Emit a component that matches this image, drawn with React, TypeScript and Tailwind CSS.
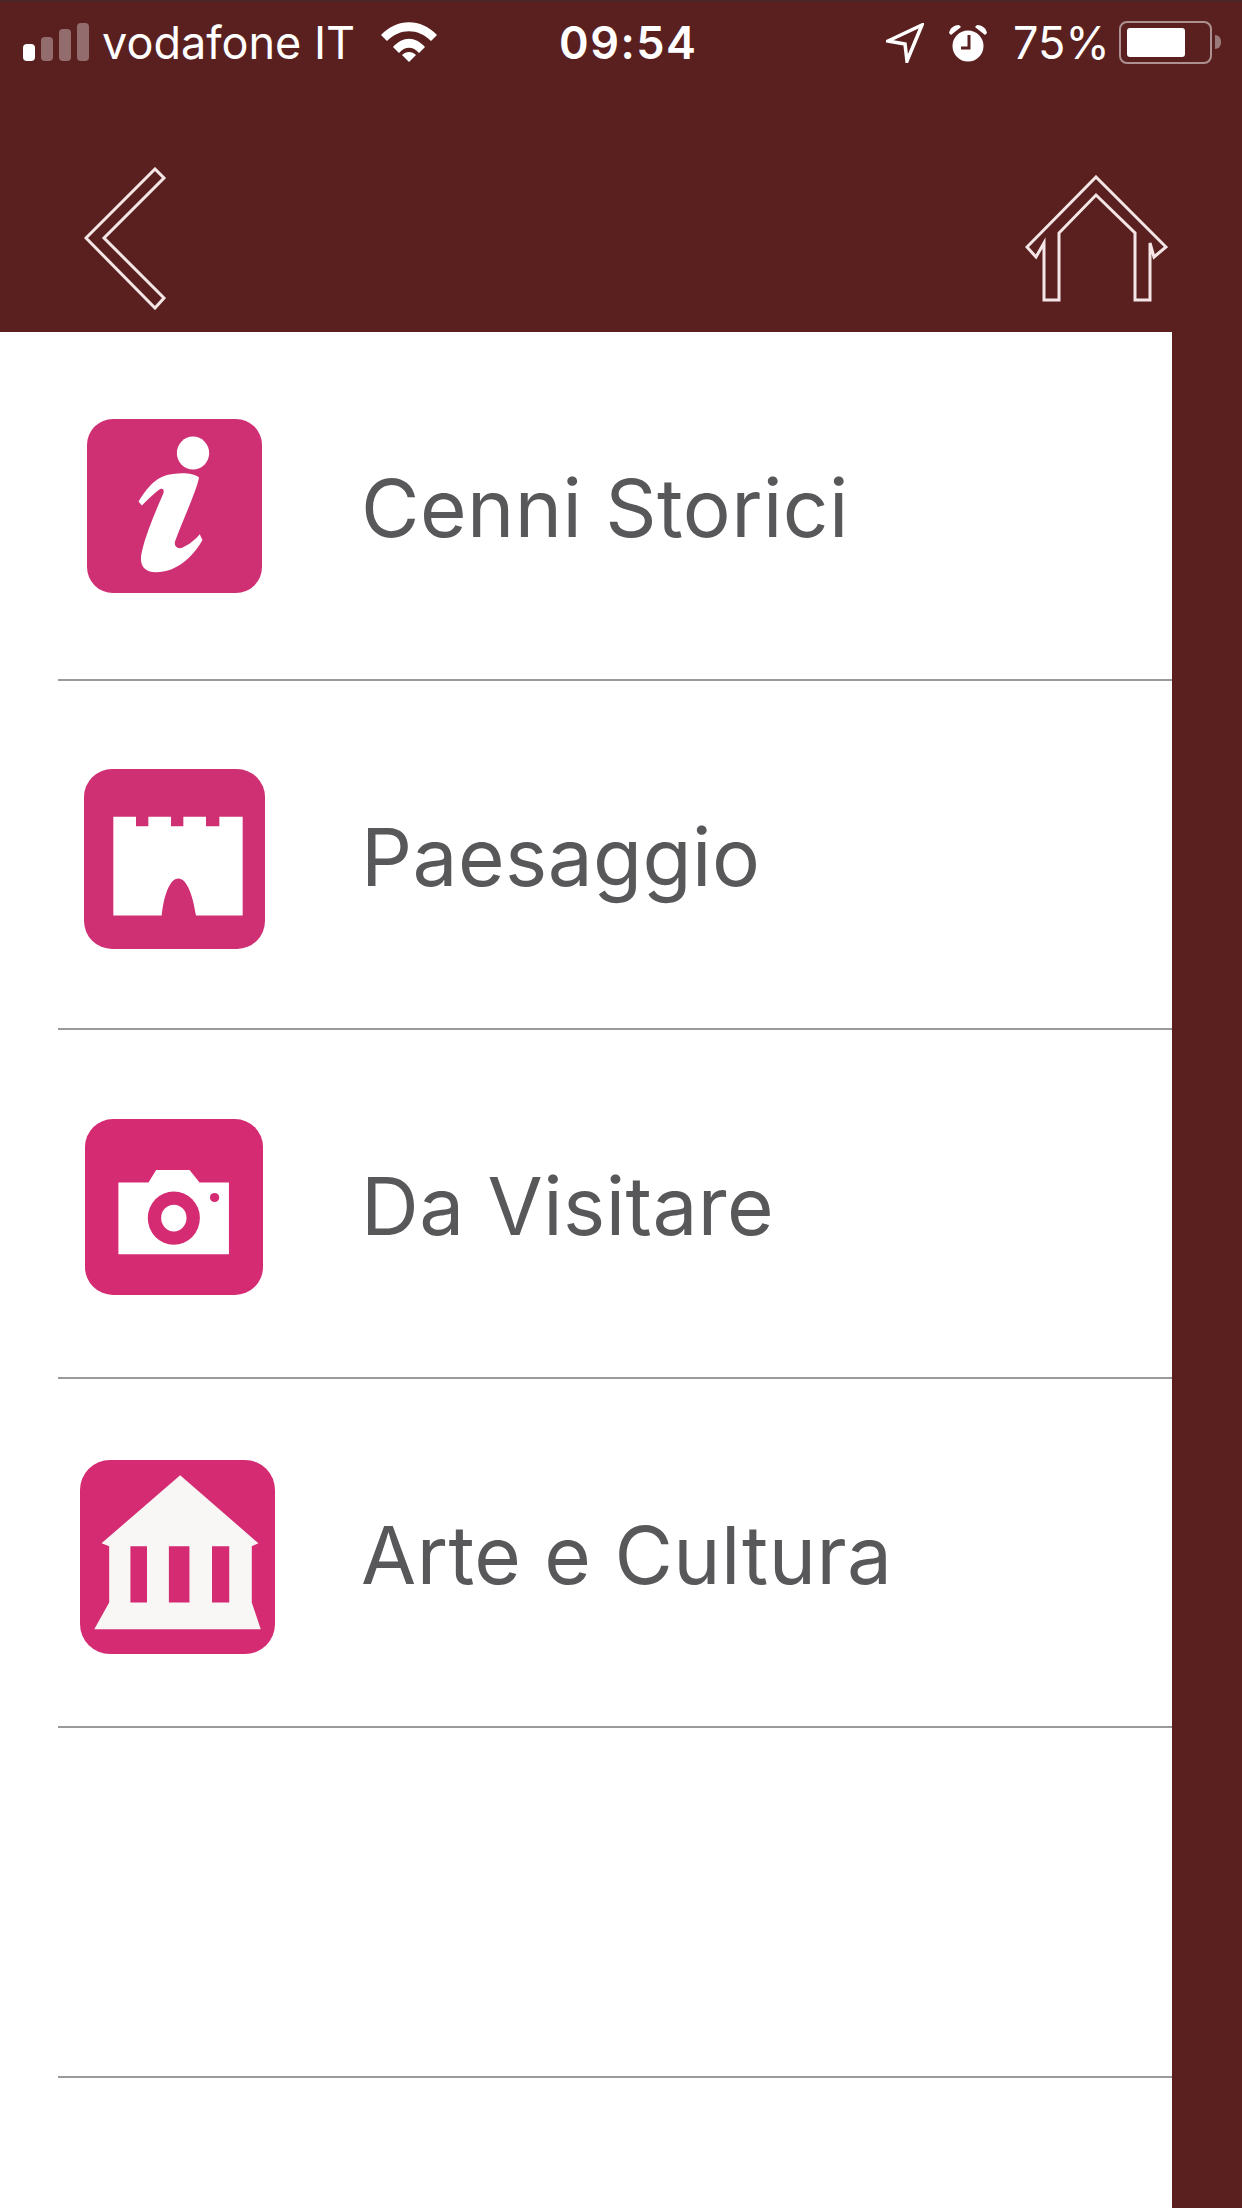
const items = [
  { label: "Cenni Storici", Icon: InfoIcon, box: "h-[174px] w-[175px] rounded-[26px] mt-[0px] bg-[#cf3074]" },
  { label: "Paesaggio", Icon: CastleIcon, box: "h-[180px] w-[181px] rounded-[28px] mt-[8px] bg-[#cf3074]" },
  { label: "Da Visitare", Icon: CameraIcon, box: "h-[176px] w-[178px] rounded-[28px] mt-[6px] bg-[#d42b72]" },
  { label: "Arte e Cultura", Icon: TempleIcon, box: "h-[194px] w-[195px] rounded-[30px] mt-[8px] ml-[6px] bg-[#d42b72]" },
];

function InfoIcon() {
  return (
    <svg viewBox="85 55 520 485" preserveAspectRatio="none" className="h-full w-full" fill="#fff">
      <ellipse cx="400" cy="150" rx="48" ry="46" />
      <path d="M238 285C262 248 292 212 340 208C370 205 400 205 418 218C408 262 368 340 346 398C344 415 360 420 376 410C395 400 410 388 420 376L428 392C400 440 350 482 290 482C255 482 238 462 248 425C260 375 290 310 312 262C316 248 306 246 296 254C280 266 262 282 248 296Z" />
    </svg>
  );
}

function CastleIcon() {
  return (
    <svg viewBox="72 1030 543 510" preserveAspectRatio="none" className="h-full w-full" fill="#fff">
      <path d="M160 1165H228V1192H265V1165H333V1192H370V1165H438V1192H478V1165H548V1445H408C398 1385 380 1340 355 1340C330 1340 312 1385 305 1445H160Z" />
    </svg>
  );
}

function CameraIcon() {
  return (
    <svg viewBox="72 48 533 462" preserveAspectRatio="none" className="h-full w-full">
      <path fill="#fff" d="M172 215H262L285 182H385L415 215H503V403H172Z" />
      <ellipse cx="338" cy="308" rx="78" ry="70" fill="#d42b72" />
      <ellipse cx="338" cy="308" rx="38" ry="35" fill="#fff" />
      <ellipse cx="460" cy="254" rx="14" ry="12" fill="#d42b72" />
    </svg>
  );
}

function TempleIcon() {
  return (
    <svg viewBox="60 942 588 508" preserveAspectRatio="none" className="h-full w-full">
      <path fill="#f8f7f6" d="M362 982L598 1160L578 1168V1315L605 1385H103L148 1315V1168L125 1160Z" />
      <path fill="#d42b72" d="M212 1168H262V1315H212ZM328 1168H390V1315H328ZM458 1168H510V1315H458Z" />
    </svg>
  );
}

function StatusBar() {
  return (
    <div className="flex h-[66px] items-start border-t-2 border-[#4c2628] pt-[18px] text-[45px] leading-[46px] text-white">
      <div className="ml-[23px] mt-[3px] flex h-[38px] items-end gap-[6px]">
        <span className="h-[17px] w-[12px] rounded-[4px] bg-white" />
        <span className="h-[24px] w-[12px] rounded-[4px] bg-white/35" />
        <span className="h-[32px] w-[12px] rounded-[4px] bg-white/35" />
        <span className="h-[38px] w-[12px] rounded-[4px] bg-white/35" />
      </div>
      <span className="ml-[13px] w-[256px] whitespace-nowrap">vodafone IT</span>
      <svg viewBox="0 0 56 40" className="ml-[23px] mt-[2px] h-[40px] w-[56px]" fill="#fff">
        <path d="M0 13C16 -4 40 -4 56 13L50 19C37 6 19 6 6 19Z" />
        <path d="M12 25C22 14 34 14 44 25L38 31C32 24 24 24 18 31Z" />
        <path d="M21 33C25 29 31 29 35 33L28 40Z" />
      </svg>
      <span className="ml-[122px] w-[136px] whitespace-nowrap font-semibold tracking-[1.5px]">09:54</span>
      <svg viewBox="0 0 38 40" className="ml-[191px] mt-[3px] h-[40px] w-[38px]" fill="none" stroke="#fff" strokeWidth="3.5">
        <path d="M2 18L36 2L21 38L19 21Z" />
      </svg>
      <svg viewBox="0 0 40 38" className="ml-[24px] mt-[4px] h-[38px] w-[40px]">
        <circle cx="20" cy="22" r="15.5" fill="#fff" />
        <path d="M21 11V24H13" stroke="#5a2020" strokeWidth="3" fill="none" />
        <path d="M1 9C2 4 6 1 11 1L13 3L3 11Z" fill="#fff" />
        <path d="M39 9C38 4 34 1 29 1L27 3L37 11Z" fill="#fff" />
      </svg>
      <span className="ml-[25px] w-[92px] whitespace-nowrap">75%</span>
      <div className="ml-[14px] mt-[1px] flex h-[43px] w-[93px] items-center rounded-[8px] border-2 border-white/50 pl-[6px]">
        <span className="h-[29px] w-[58px] rounded-[3px] bg-white" />
      </div>
      <span className="ml-[3px] mt-[15px] h-[14px] w-[6px] rounded-r-full bg-white/40" />
    </div>
  );
}

function NavBar() {
  return (
    <div className="flex h-[266px] items-start justify-between pl-[84px] pr-[74px]">
      <svg viewBox="84 167 84 143" className="mt-[101px] h-[143px] w-[84px]" fill="none" stroke="#f4e6e6" strokeWidth="3">
        <path d="M86 238L155 169L164 178L104 238L164 298L155 308Z" />
      </svg>
      <svg viewBox="1025 175 143 128" className="mt-[109px] h-[128px] w-[143px]" fill="none" stroke="#f4e6e6" strokeWidth="3">
        <path d="M1096 177L1166 247L1154 257L1150 243V300H1135V233L1096 195L1059 233V300H1044V243L1036 257L1027 247Z" />
      </svg>
    </div>
  );
}

export default function App() {
  return (
    <div className="flex h-[2208px] w-[1242px] flex-col bg-[#5a2020] font-['Inter',sans-serif]">
      <StatusBar />
      <NavBar />
      <ul className="h-[1876px] w-[1172px] bg-white pl-[58px]">
        {items.map(({ label, Icon, box }) => (
          <li key={label} className="flex h-[349px] items-center border-b-2 border-[#9a9a9a]">
            <div className="flex w-[232px] justify-center">
              <div className={`overflow-hidden ${box}`}>
                <Icon />
              </div>
            </div>
            <span className="ml-[71px] mt-[5px] text-[80px] tracking-[0.45px] text-[#58585a]">{label}</span>
          </li>
        ))}
        <li className="h-[350px] border-b-2 border-[#9a9a9a]" />
      </ul>
    </div>
  );
}
